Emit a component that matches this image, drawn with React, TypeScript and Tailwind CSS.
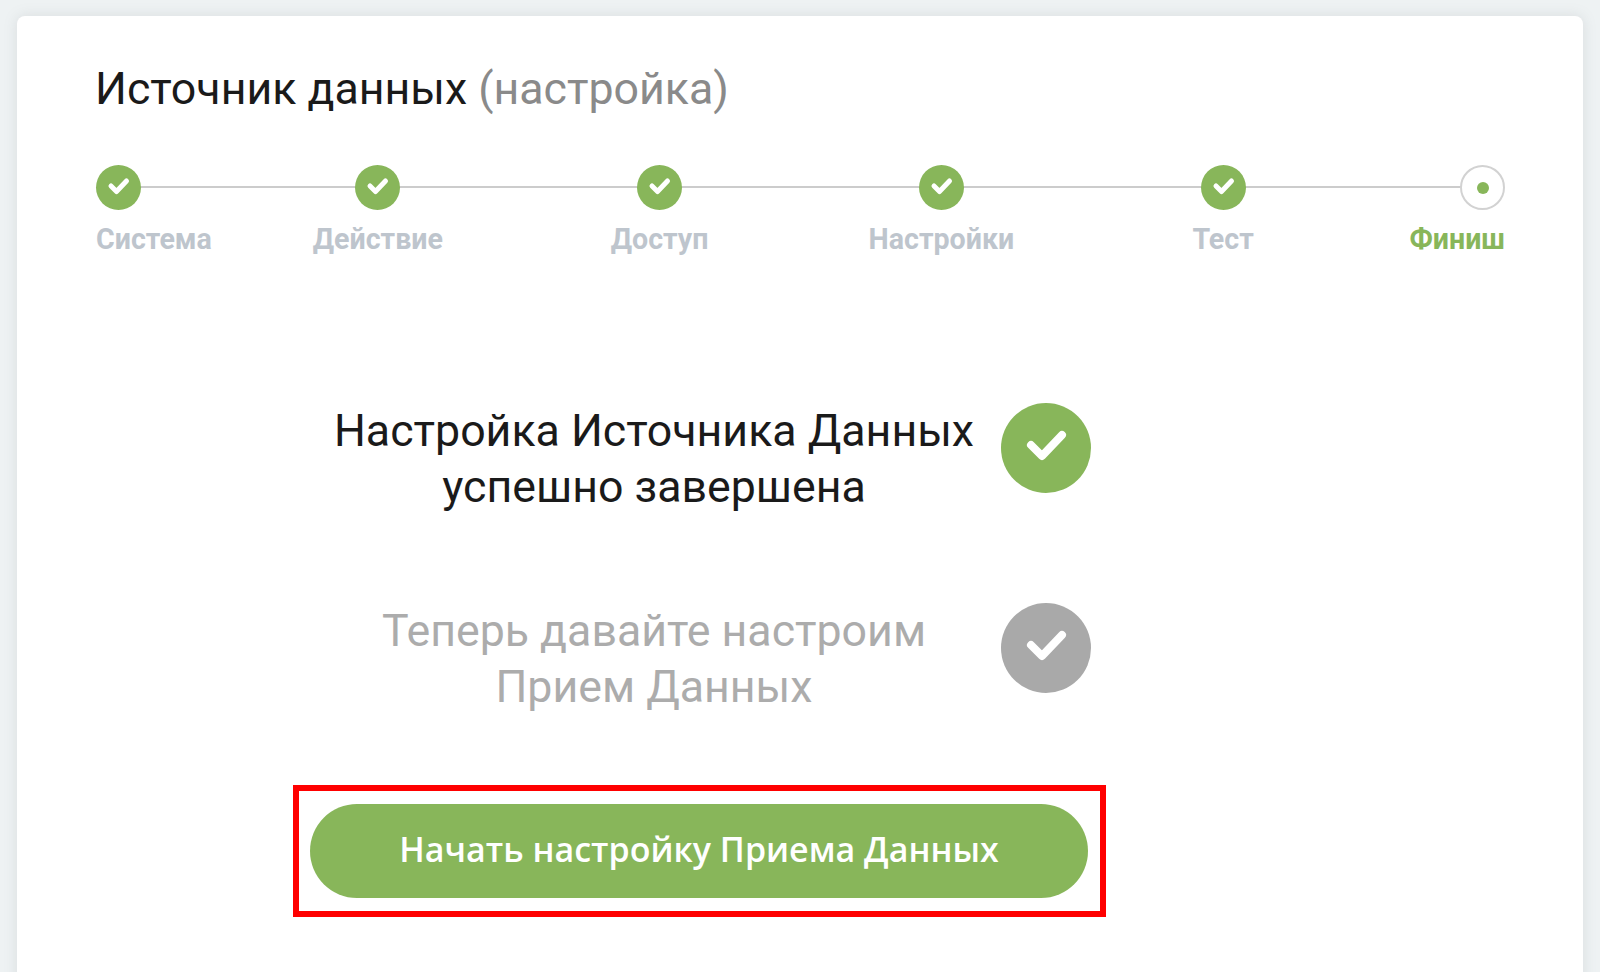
const steps = [
  { label: "Система", align: "items-start" },
  { label: "Действие", align: "items-center" },
  { label: "Доступ", align: "items-center" },
  { label: "Настройки", align: "items-center" },
  { label: "Тест", align: "items-center" },
];

function CheckMark({ size, weight = 8 }: { size: number; weight?: number }) {
  return (
    <svg width={size} height={size} viewBox="0 0 90 90" fill="none">
      <path
        d="M30 42L41 53L61 32"
        stroke="white"
        strokeWidth={weight}
        strokeLinecap="round"
        strokeLinejoin="round"
      />
    </svg>
  );
}

function ResultRow({
  lines,
  muted,
}: {
  lines: string[];
  muted?: boolean;
}) {
  return (
    <div className="flex items-start">
      <p
        className={`w-[642px] whitespace-nowrap text-center text-[44.7px] leading-[56px] ${
          muted ? "text-[#acacac]" : "text-[#1a1a1a]"
        }`}
      >
        {lines[0]}
        <br />
        {lines[1]}
      </p>
      <div
        className={`ml-[26px] h-[90px] w-[90px] rounded-full ${
          muted ? "bg-[#a9a9a9]" : "bg-[#88b65a]"
        }`}
      >
        <CheckMark size={90} />
      </div>
    </div>
  );
}

export default function App() {
  return (
    <div className="h-[972px] overflow-hidden bg-[#eef2f3] px-[17px] pt-4 font-['Roboto',sans-serif]">
      <div className="h-[1000px] rounded-lg bg-white pl-[79px] pr-[78px] pt-[44px] shadow-[0_0_14px_rgba(120,130,135,0.18)]">
        <h1 className="-ml-px text-[44.7px] leading-[58px] text-[#1a1a1a]">
          Источник данных <span className="text-[#8a8a8a]">(настройка)</span>
        </h1>

        <div className="relative mt-[47px] grid grid-cols-[141px_repeat(4,1fr)_141px]">
          <div className="absolute left-5 right-5 top-[21px] h-0.5 bg-[#cccccc]" />
          {steps.map((step) => (
            <div key={step.label} className={`relative flex flex-col ${step.align}`}>
              <div className="h-[45px] w-[45px] rounded-full bg-[#88b65a]">
                <CheckMark size={45} weight={10} />
              </div>
              <span className="mt-[12px] text-[28.6px] font-bold leading-[34px] text-[#bec5cd]">
                {step.label}
              </span>
            </div>
          ))}
          <div className="relative flex flex-col items-end">
            <div className="flex h-[45px] w-[45px] items-center justify-center rounded-full border-2 border-[#d2d2d2] bg-white">
              <div className="h-3 w-3 rounded-full bg-[#88b65a]" />
            </div>
            <span className="mt-[12px] text-[28.6px] font-bold leading-[34px] text-[#88b65a]">
              Финиш
            </span>
          </div>
        </div>

        <div className="ml-[237px] mt-[147px] flex flex-col gap-[88px]">
          <ResultRow lines={["Настройка Источника Данных", "успешно завершена"]} />
          <ResultRow muted lines={["Теперь давайте настроим", "Прием Данных"]} />
        </div>

        <div className="ml-[197px] mt-[70px] w-[813px] border-[6px] border-[#ff0000] px-[11px] py-[13px]">
          <button className="flex h-[94px] w-[778px] items-center justify-center rounded-full bg-[#88b65a] pb-[3px] font-['Open_Sans',sans-serif] text-[34px] font-semibold text-white">
            Начать настройку Приема Данных
          </button>
        </div>
      </div>
    </div>
  );
}
